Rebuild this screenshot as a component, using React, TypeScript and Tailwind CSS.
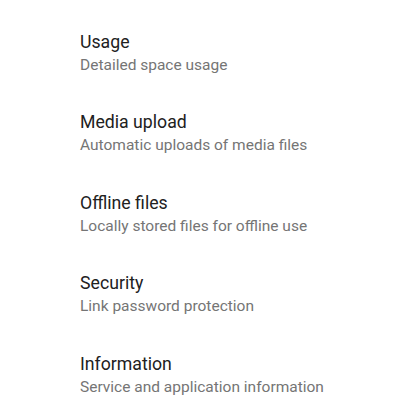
const items = [
  { title: 'Usage', sub: 'Detailed space usage' },
  { title: 'Media upload', sub: 'Automatic uploads of media files' },
  { title: 'Offline files', sub: 'Locally stored files for offline use' },
  { title: 'Security', sub: 'Link password protection' },
  { title: 'Information', sub: 'Service and application information' },
]

export default function App() {
  return (
    <div className="w-[400px] h-[400px] bg-white pt-[12.5px] font-['Roboto',sans-serif] overflow-hidden">
      {items.map((it) => (
        <div key={it.title} className="h-[80.5px] flex flex-col justify-center pl-[80px]">
          <p className="text-[17.7px] leading-[22px] text-[#212121]">{it.title}</p>
          <p className="text-[15.5px] leading-[20px] mt-[2px] text-[#757575]">{it.sub}</p>
        </div>
      ))}
    </div>
  )
}
